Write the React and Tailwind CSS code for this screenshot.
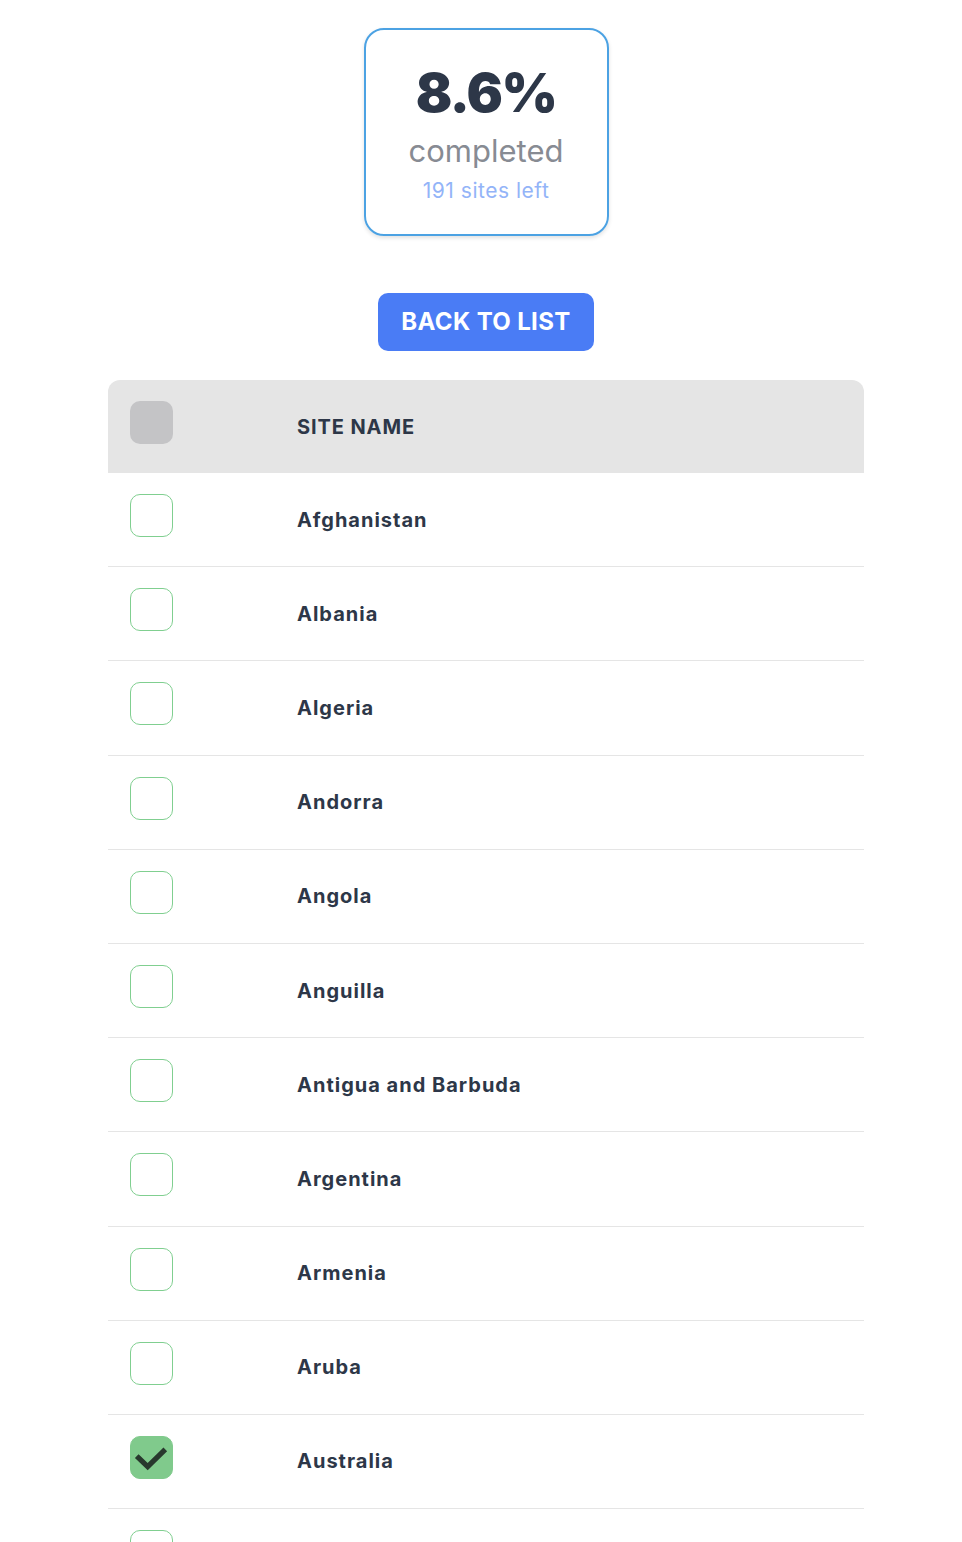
import { useState } from "react";

const SITES = [
  "Afghanistan",
  "Albania",
  "Algeria",
  "Andorra",
  "Angola",
  "Anguilla",
  "Antigua and Barbuda",
  "Argentina",
  "Armenia",
  "Aruba",
  "Australia",
  "Austria",
  "Azerbaijan",
];

const Check = () => (
  <svg width="43" height="43" viewBox="0 0 43 43" fill="none">
    <polyline
      points="8,22 17.5,31 34,15"
      stroke="#28382d"
      strokeWidth="5.5"
      strokeLinecap="square"
    />
  </svg>
);

const Checkbox = ({ checked, onClick }) => (
  <button
    onClick={onClick}
    className={`w-[43px] h-[43px] rounded-[10px] border flex items-center justify-center mb-[8px] ${
      checked ? "bg-[#80ca8c] border-[#80ca8c]" : "bg-white border-[#80cf90]"
    }`}
  >
    {checked && <Check />}
  </button>
);

const App = () => {
  const [done, setDone] = useState({ Australia: true });

  const toggle = (name) => {
    setDone((prev) => ({ ...prev, [name]: !prev[name] }));
  };

  return (
    <div className="min-h-screen bg-white font-['Inter',sans-serif] text-[#2d3748]">
      <div className="w-[756px] ml-[108px] flex flex-col items-center pt-[28px]">
        {/* progress card */}
        <div className="w-[245px] h-[208px] rounded-[20px] border-2 border-[#4ca2e3] shadow-[0_2px_4px_rgba(0,0,0,0.12)] flex flex-col items-center pt-[35px]">
          <div className="text-[54px] leading-[56px] font-black tracking-[-0.03em]">8.6%</div>
          <div className="mt-[10px] text-[31px] leading-[40px] text-[#878b93]">completed</div>
          <div className="mt-[6px] text-[21px] leading-[28px] tracking-[0.025em] text-[#93b4f8]">191 sites left</div>
        </div>

        <button className="mt-[57px] w-[216px] h-[58px] rounded-[10px] bg-[#4a7cf5] text-white text-[24px] font-bold tracking-[0.015em] flex items-center justify-center">
          BACK TO LIST
        </button>

        {/* sites table */}
        <div className="mt-[29px] w-full">
          <div className="h-[93px] bg-[#e5e5e5] rounded-t-[12px] grid grid-cols-[189px_1fr] items-center">
            <div className="pl-[22px] flex items-center">
              <div className="w-[43px] h-[43px] rounded-[10px] bg-[#c4c4c6] mb-[8px]" />
            </div>
            <div className="text-[20px] font-bold tracking-[0.045em]">SITE NAME</div>
          </div>
          {SITES.map((name) => (
            <div
              key={name}
              className="h-[94.2px] border-b border-[#e5e5e5] grid grid-cols-[189px_1fr] items-center"
            >
              <div className="pl-[22px] flex items-center">
                <Checkbox checked={!!done[name]} onClick={() => toggle(name)} />
              </div>
              <div className="text-[20px] font-bold tracking-[0.05em]">{name}</div>
            </div>
          ))}
        </div>
      </div>
    </div>
  );
};

export default App;
